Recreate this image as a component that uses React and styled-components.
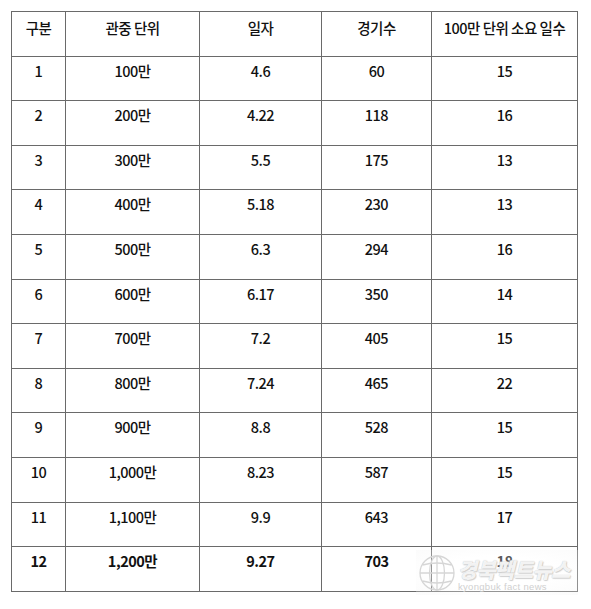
import React from "react";
import styled, { createGlobalStyle } from "styled-components";

const Global = createGlobalStyle`
  html, body { margin: 0; padding: 0; background: #fff; }
  body { font-family: "Noto Sans CJK KR", "Noto Sans", sans-serif; color: #111; }
`;

const Page = styled.div`
  position: relative;
  width: 591px;
  height: 609px;
  padding: 11px 0 0 11px;
  box-sizing: border-box;
  background: #fff;
`;

const Table = styled.table`
  width: 566px;
  border-collapse: collapse;
  table-layout: fixed;
`;

const Row = styled.tr`
  height: 44.6px;
`;

const Cell = styled.td`
  border: 1px solid #6a6a6a;
  padding: 0;
  padding-top: ${(p) => (p.$head ? "6px" : "4px")};
  vertical-align: top;
  text-align: center;
  font-family: "Noto Sans CJK KR", sans-serif;
  font-size: 14.5px;
  line-height: 20px;
  letter-spacing: -0.5px;
  font-weight: ${(p) => (p.$bold ? 700 : 500)};
  color: #111;
  white-space: nowrap;
`;

const Watermark = styled.div`
  position: absolute;
  left: 416px;
  top: 550px;
  width: 162px;
  height: 45px;
  display: flex;
  align-items: center;
  gap: 1px;
  padding-left: 2px;
  box-sizing: border-box;
  background: radial-gradient(ellipse at center, rgba(255,255,255,0.3) 50%, rgba(240,240,240,0.25) 100%);
  pointer-events: none;
`;

const Brand = styled.div`
  display: flex;
  flex-direction: column;
  line-height: 1;
  margin-top: 6px;
`;

const BrandName = styled.span`
  font-family: "Noto Sans CJK KR", sans-serif;
  font-weight: 900;
  font-size: 21px;
  letter-spacing: -0.6px;
  color: rgba(252,252,252,0.9);
  text-shadow: 0 0 1px rgba(170,170,170,0.8), 1px 1px 1px rgba(200,200,200,0.8);
  transform: skewX(-14deg);
  transform-origin: left bottom;
`;

const BrandSub = styled.span`
  font-family: "Liberation Sans", sans-serif;
  font-size: 9.5px;
  color: #d0d0d0;
  margin-top: 2px;
  margin-left: 1px;
  letter-spacing: 0.3px;
`;

const Globe = () => (
  <svg width="38" height="40" viewBox="0 0 38 40" fill="none" stroke="#d6d6d6" strokeWidth="1.3">
    <circle cx="19" cy="20" r="17" />
    <ellipse cx="19" cy="20" rx="7.5" ry="17" />
    <line x1="19" y1="3" x2="19" y2="37" />
    <path d="M4.5 12 Q19 8 33.5 12" />
    <path d="M2 20 H36" />
    <path d="M4.5 28 Q19 32 33.5 28" />
  </svg>
);

const header = ["구분", "관중 단위", "일자", "경기수", "100만 단위 소요 일수"];
const rows = [
  ["1", "100만", "4.6", "60", "15"],
  ["2", "200만", "4.22", "118", "16"],
  ["3", "300만", "5.5", "175", "13"],
  ["4", "400만", "5.18", "230", "13"],
  ["5", "500만", "6.3", "294", "16"],
  ["6", "600만", "6.17", "350", "14"],
  ["7", "700만", "7.2", "405", "15"],
  ["8", "800만", "7.24", "465", "22"],
  ["9", "900만", "8.8", "528", "15"],
  ["10", "1,000만", "8.23", "587", "15"],
  ["11", "1,100만", "9.9", "643", "17"],
  ["12", "1,200만", "9.27", "703", "18"],
];

const widths = [54, 134, 122, 110, 146];

export default function App() {
  return (
    <>
      <Global />
      <Page>
        <Table>
          <colgroup>
            {widths.map((w, i) => (
              <col key={i} style={{ width: w }} />
            ))}
          </colgroup>
          <tbody>
            <Row>
              {header.map((h) => (
                <Cell key={h} $head>
                  {h}
                </Cell>
              ))}
            </Row>
            {rows.map((r, i) => (
              <Row key={i}>
                {r.map((c, j) => (
                  <Cell key={j} $bold={i === rows.length - 1}>
                    {c}
                  </Cell>
                ))}
              </Row>
            ))}
          </tbody>
        </Table>
        <Watermark>
          <Globe />
          <Brand>
            <BrandName>경북팩트뉴스</BrandName>
            <BrandSub>kyongbuk fact news</BrandSub>
          </Brand>
        </Watermark>
      </Page>
    </>
  );
}
